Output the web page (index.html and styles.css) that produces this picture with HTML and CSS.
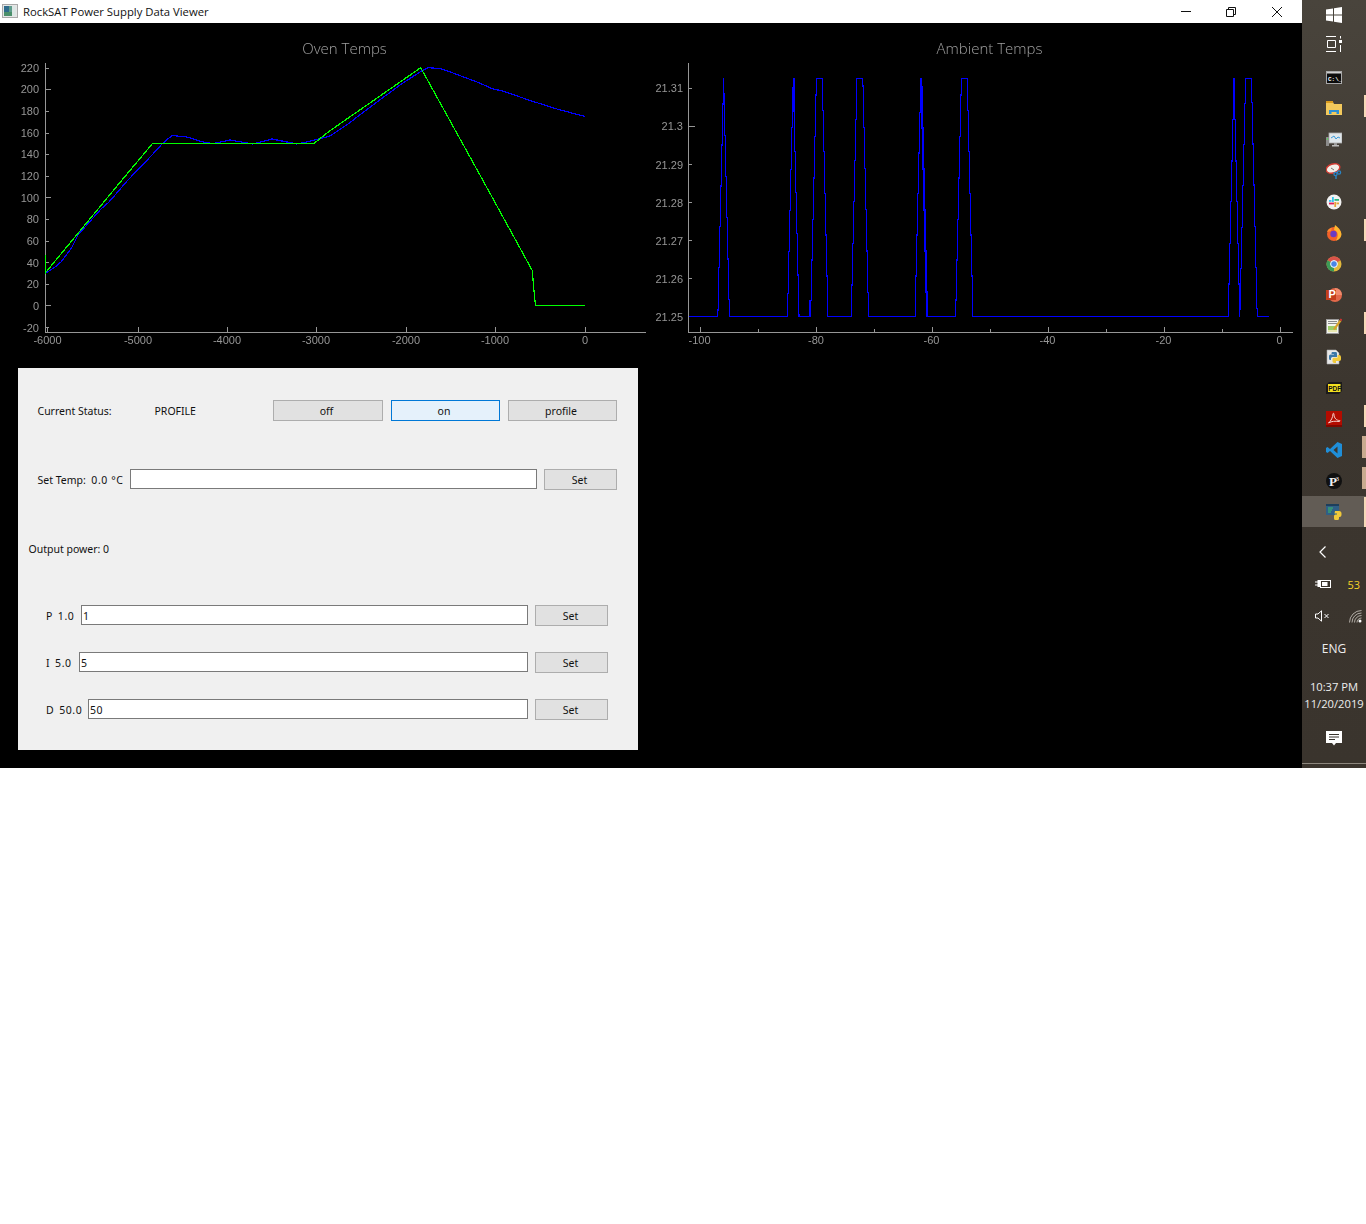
FILE: index.html
```html
<!DOCTYPE html>
<html>
<head>
    <title>RockSAT Power Supply Data Viewer</title>
    <link rel="stylesheet" href="styles.css">
</head>
<body>
<div class="screen">
    <div class="app">
        <div class="titlebar">
            <svg class="app-icon" width="16" height="16" viewBox="0 0 16 16">
                <rect x="0.5" y="0.5" width="15" height="13" fill="#e6e6e6" stroke="#a9a9a9"/>
                <rect x="2" y="2" width="5" height="10" fill="#2f6c8c"/>
                <rect x="7" y="2" width="3" height="10" fill="#5f9c8c"/>
                <rect x="10" y="2" width="4" height="10" fill="#dce6e4"/>
                <rect x="2" y="8" width="8" height="4" fill="#4a8f6a"/>
            </svg>
            <span class="app-title">RockSAT Power Supply Data Viewer</span>
            <div class="window-controls">
                <svg class="win-min" width="12" height="12" viewBox="0 0 12 12"><path d="M1 5.5H11" stroke="#111" fill="none"/></svg>
                <svg width="12" height="12" viewBox="0 0 12 12"><path d="M1.5 3.5H8.5V10.5H1.5ZM3.5 3.5V1.5H10.5V8.5H8.5" stroke="#111" fill="none"/></svg>
                <svg width="12" height="12" viewBox="0 0 12 12"><path d="M1 1L11 11M11 1L1 11" stroke="#111" fill="none"/></svg>
            </div>
        </div>

        <div class="plots">
            <!-- viewBox keeps the screen coordinates of the readings -->
            <svg class="plot" width="646" height="345" viewBox="0 23 646 345">
                <text class="plot-title" x="344.5" y="54">Oven Temps</text>
                <path class="axis" d="M45.5 63V332.5H646"/>
                <path class="axis" d="M45.5 68H49M45.5 89.5H51M45.5 111H49M45.5 133H49M45.5 154H49M45.5 176H49M45.5 197.5H51M45.5 219H49M45.5 241H49M45.5 262H49M45.5 284H49M45.5 305.5H51M45.5 327H49"/>
                <path class="axis" d="M47.5 332V327M138.5 332V327M227.5 332V327M316.5 332V327M406.5 332V327M495.5 332V327M585.5 332V327"/>
                <g class="tick-left">
                    <text x="39" y="72">220</text>
                    <text x="39" y="93">200</text>
                    <text x="39" y="115">180</text>
                    <text x="39" y="137">160</text>
                    <text x="39" y="158">140</text>
                    <text x="39" y="180">120</text>
                    <text x="39" y="202">100</text>
                    <text x="39" y="223">80</text>
                    <text x="39" y="245">60</text>
                    <text x="39" y="267">40</text>
                    <text x="39" y="288">20</text>
                    <text x="39" y="310">0</text>
                    <text x="39" y="332">-20</text>
                </g>
                <g class="tick-bottom">
                    <text x="47.5" y="344">-6000</text>
                    <text x="138" y="344">-5000</text>
                    <text x="227" y="344">-4000</text>
                    <text x="316" y="344">-3000</text>
                    <text x="406" y="344">-2000</text>
                    <text x="495" y="344">-1000</text>
                    <text x="585" y="344">0</text>
                </g>
                <polyline class="trace-blue" points="46,273 55,267 61,262 71.5,248 78,235 101,209 109,202 128,180 152,155 163,143 172,135.5 187,137 203,142 213,143.5 230,140 247,143 253,144 272,139 297,144 313,140.5 330,136 348,124 365,111 400,85 420,72 428,67.7 440,68.5 453,73 477,82 493,89 503,91 530,100.5 557,109 585,116.5"/>
                <polyline class="trace-green" points="45.5,255 45.5,272.7 122,180 152.7,143.3 314,143.3 330,130.7 420.7,67.7 482.7,180 532.4,270.7 533,280 535.4,305.3 585,305.3"/>
            </svg>

            <svg class="plot" width="656" height="345" viewBox="646 23 656 345">
                <text class="plot-title" x="989.5" y="54">Ambient Temps</text>
                <path class="axis" d="M688.5 63V332.5H1293"/>
                <path class="axis" d="M688.5 88H692M688.5 126H695M688.5 164H692M688.5 202H692M688.5 240H692M688.5 278H692M688.5 316H692"/>
                <path class="axis" d="M700.5 332V327M758.5 332V329M816.5 332V327M874.5 332V329M932.5 332V327M990.5 332V329M1048.5 332V327M1106.5 332V329M1164.5 332V327M1222.5 332V329M1280.5 332V327"/>
                <g class="tick-left">
                    <text x="683" y="92">21.31</text>
                    <text x="683" y="130">21.3</text>
                    <text x="683" y="169">21.29</text>
                    <text x="683" y="207">21.28</text>
                    <text x="683" y="245">21.27</text>
                    <text x="683" y="283">21.26</text>
                    <text x="683" y="321">21.25</text>
                </g>
                <g class="tick-bottom">
                    <text x="699.5" y="344">-100</text>
                    <text x="816" y="344">-80</text>
                    <text x="931.5" y="344">-60</text>
                    <text x="1047.5" y="344">-40</text>
                    <text x="1163.5" y="344">-20</text>
                    <text x="1279.5" y="344">0</text>
                </g>
                <polyline class="trace-blue" points="688.5,316.7 717.3,316.7 717.3,310 718.3,310 718.3,267.7 719.3,267.7 719.3,226.7 720.3,226.7 720.3,186 721.3,186 721.3,145 722.3,145 722.3,104 723.3,104 723.3,78.3 723.3,94 724.3,94 724.3,135.3 725.3,135.3 725.3,176.7 726.3,176.7 726.3,217.7 727.3,217.7 727.3,259 728.3,259 728.3,299.3 729.3,299.3 729.3,316.7
                    787.3,316.7 787.3,293.3 788.3,293.3 788.3,251.7 789.3,251.7 789.3,210.7 790.3,210.7 790.3,169.3 791.3,169.3 791.3,127.7 792.3,127.7 792.3,87.3 793.3,87.3 793.3,78.3 794,78.3 794,111.7 794.3,111.7 794.3,151.7 795.3,151.7 795.3,192.3 796.3,192.3 796.3,233.3 797.3,233.3 797.3,275 798.3,275 798.3,315 799,315 799,316.7
                    810,316.7 810,300.7 811.3,300.7 811.3,260 812.3,260 812.3,219.3 813.3,219.3 813.3,178 814.3,178 814.3,136.7 815.3,136.7 815.3,95 816.3,95 816.3,78.3 822.7,78.3 822.7,110.7 823.7,110.7 823.7,151.7 824.7,151.7 824.7,193.3 825.7,193.3 825.7,235 826.7,235 826.7,276 827.7,276 827.7,316.7
                    851.7,316.7 851.7,285 852.7,285 852.7,243.3 853.7,243.3 853.7,201.7 854.7,201.7 854.7,160.7 855.7,160.7 855.7,119.3 856.7,119.3 856.7,78.3 862.7,78.3 862.7,86 863.7,86 863.7,127.3 864.7,127.3 864.7,168.3 865.7,168.3 865.7,209.3 866.7,209.3 866.7,251 867.7,251 867.7,292.3 868.7,292.3 868.7,316.7
                    915.7,316.7 915.7,276 916.7,276 916.7,235 917.7,235 917.7,193.3 918.7,193.3 918.7,153 919.7,153 919.7,112.7 920.3,112.7 920.3,78.3 921,78.3 921,87 922,87 922,128 923,128 923,169 924,169 924,210 925,210 925,251 926,251 926,292 927,292 927,316.7
                    955.3,316.7 955.3,300 956.3,300 956.3,260 957.7,260 957.7,219.3 958.7,219.3 958.7,178 959.7,178 959.7,136.7 960.7,136.7 960.7,95 961.7,95 961.7,78.3 967.3,78.3 967.3,110.7 968.3,110.7 968.3,151.7 969.3,151.7 969.3,193.3 970.3,193.3 970.3,235 971.3,235 971.3,276 972.3,276 972.3,316.7
                    1228.3,316.7 1228.3,284 1229.3,284 1229.3,243.3 1230.3,243.3 1230.3,201.7 1231.3,201.7 1231.3,161 1232.3,161 1232.3,119.3 1233.3,119.3 1233.3,78.3 1234.7,78.3 1234.7,119.3 1235.3,119.3 1235.3,161 1236.3,161 1236.3,201.7 1237.3,201.7 1237.3,243.3 1238.3,243.3 1238.3,284 1239.3,284 1239.3,316.7
                    1239.3,309.3 1240.3,309.3 1240.3,268.3 1241.3,268.3 1241.3,227.3 1242.3,227.3 1242.3,185.7 1243.3,185.7 1243.3,144.3 1244.3,144.3 1244.3,103.3 1245.3,103.3 1245.3,78.3 1251.3,78.3 1251.3,102.7 1252.3,102.7 1252.3,144 1253.3,144 1253.3,185 1254.3,185 1254.3,226.7 1255.3,226.7 1255.3,267.7 1256.3,267.7 1256.3,308.7 1257.3,308.7 1257.3,316.7 1268.7,316.7"/>
            </svg>
        </div>

        <div class="panel">
            <div class="row status-row">
                <span class="status-label">Current Status:</span>
                <span class="status-value">PROFILE</span>
                <div class="mode-buttons">
                    <button class="btn btn-off">off</button>
                    <button class="btn btn-on">on</button>
                    <button class="btn btn-profile">profile</button>
                </div>
            </div>
            <div class="row temp-row">
                <span class="temp-label">Set Temp:&nbsp; <span class="num">0.0 °C</span></span>
                <input type="text" class="field">
                <button class="btn btn-set">Set</button>
            </div>
            <div class="power-row">Output power: 0</div>
            <div class="row pid-row pid-first">
                <span class="pid-p">P&nbsp; <span class="num">1.0</span></span>
                <input type="text" class="field" value="1">
                <button class="btn btn-set">Set</button>
            </div>
            <div class="row pid-row">
                <span class="pid-i">I&nbsp; <span class="num">5.0</span></span>
                <input type="text" class="field" value="5">
                <button class="btn btn-set">Set</button>
            </div>
            <div class="row pid-row">
                <span class="pid-d">D&nbsp; <span class="num">50.0</span></span>
                <input type="text" class="field" value="50">
                <button class="btn btn-set">Set</button>
            </div>
        </div>
    </div>

    <div class="taskbar">
        <div class="task task-start">
            <svg width="16" height="16" viewBox="0 0 16 16"><path d="M0 2.5L7 1.5V7.5H0ZM8 1.3L16 0V7.5H8ZM0 8.5H7V14.5L0 13.5ZM8 8.5H16V16L8 14.7Z" fill="#fff"/></svg>
        </div>
        <div class="task task-view">
            <svg width="16" height="16" viewBox="0 0 16 16"><path d="M0 .5H10M0 15.5H10M1.5 4.5H9.5V11.5H1.5Z" stroke="#fff" fill="none"/><rect x="13" y="4" width="3" height="3" fill="#fff"/><path d="M14.5 0V2.5M14.5 9V16" stroke="#fff" fill="none"/></svg>
        </div>
        <div class="task">
            <svg width="16" height="14" viewBox="0 0 16 14"><rect x=".5" y=".5" width="15" height="12" fill="#0c0c0c" stroke="#a8a8a8"/><rect x="1" y="1" width="14" height="1.5" fill="#cfcfcf"/><text class="cmd-text" x="2" y="10">C:\_</text></svg>
        </div>
        <div class="task running">
            <svg width="16" height="15" viewBox="0 0 16 15"><path d="M0 1H7L8 3H16V14H0Z" fill="#f3c95c"/><path d="M0 0H7V2H0Z" fill="#d99a1e"/><path d="M3 13V9H13V13H10.5V11H5.5V13Z" fill="#2b8fd6"/></svg>
        </div>
        <div class="task">
            <svg width="16" height="16" viewBox="0 0 16 16"><rect x="3" y="1" width="13" height="10" fill="#dfe6ea" stroke="#aaa" stroke-width=".8"/><path d="M5 6L8 4L10 7L12 5L14 6" stroke="#3a9ad9" fill="none"/><rect x="8" y="11" width="3" height="2" fill="#999"/><rect x="6" y="13" width="7" height="1.5" fill="#bbb"/><rect x="0" y="5" width="3" height="9" fill="#8c8c8c"/><rect x="1" y="6" width="1" height="2" fill="#5bd15b"/></svg>
        </div>
        <div class="task">
            <svg width="16" height="16" viewBox="0 0 16 16"><ellipse cx="7" cy="5.5" rx="7" ry="4.5" fill="#f4efe8" stroke="#d23c32" stroke-width="1.4" transform="rotate(-18 7 5.5)"/><path d="M5 5L8 7" stroke="#777"/><circle cx="9.5" cy="11" r="1.6" fill="none" stroke="#2a84c4" stroke-width="1.3"/><circle cx="13" cy="9.5" r="1.6" fill="none" stroke="#2a84c4" stroke-width="1.3"/><path d="M10 12.5V16" stroke="#2a84c4" stroke-width="1.4"/></svg>
        </div>
        <div class="task">
            <svg width="16" height="16" viewBox="0 0 16 16"><circle cx="8" cy="8" r="7.5" fill="#f2f2f2"/><rect x="6" y="3" width="1.8" height="5" fill="#36c5f0"/><rect x="8.5" y="5" width="4.5" height="1.8" fill="#2eb67d"/><rect x="8.3" y="8" width="1.8" height="5" fill="#e8a33b"/><rect x="3" y="8.6" width="5" height="1.8" fill="#e01e5a"/><rect x="3" y="6" width="2.5" height="1.8" fill="#36c5f0"/><rect x="10.5" y="8.5" width="2.5" height="1.8" fill="#e8a33b"/></svg>
        </div>
        <div class="task running">
            <svg width="16" height="16" viewBox="0 0 16 16"><circle cx="8" cy="9" r="7" fill="#f2612a"/><path d="M9 0C12 2 15 5 15.500 9C15.500 12 13 15 10 15.500C13 11 12 6 8 5Z" fill="#ffb52e"/><circle cx="7.500" cy="9" r="3.200" fill="#6a3bc4"/><path d="M1 7C2 4 4 3 6 3L5 6Z" fill="#ff8a2e"/></svg>
        </div>
        <div class="task">
            <svg width="16" height="16" viewBox="0 0 16 16"><circle cx="8" cy="8" r="7.5" fill="#e2b93b"/><path d="M8 8L1.5 4.2A7.5 7.5 0 0 1 14.5 4.2Z" fill="#d9534a"/><path d="M8 8L1.5 4.2A7.5 7.5 0 0 0 8 15.5Z" fill="#3d9b58"/><circle cx="8" cy="8" r="3.4" fill="#4a86e8" stroke="#fff"/></svg>
        </div>
        <div class="task">
            <svg width="16" height="16" viewBox="0 0 16 16"><circle cx="9" cy="8" r="7" fill="#e2694a"/><path d="M9 1A7 7 0 0 1 16 8H9Z" fill="#f08a6c"/><rect x="0" y="3" width="10" height="10" fill="#c43e1c"/><text class="ppt-text" x="2.5" y="11.3">P</text></svg>
        </div>
        <div class="task running">
            <svg width="16" height="16" viewBox="0 0 16 16"><rect x=".5" y="1.500" width="12" height="14" fill="#f4f4ee" stroke="#9a9a9a"/><path d="M2 3.500H11M2 5.500H11" stroke="#8a8a8a"/><rect x="2" y="8" width="9" height="6" fill="#9ccc6a"/><rect x="2" y="12" width="9" height="2" fill="#e8e8b0"/><path d="M7 11L13.500 2L15.500 3L9 12Z" fill="#d8a32a"/><path d="M13.500 2L14.500 .5L16 1.200V3Z" fill="#c33"/></svg>
        </div>
        <div class="task">
            <svg width="16" height="16" viewBox="0 0 16 16"><path d="M1 1H10L13 4V15H1Z" fill="#e8e8e8" stroke="#aaa" stroke-width=".6"/><path d="M6 3H10A1.5 1.5 0 0 1 11 4.5V8H6.5A1.5 1.5 0 0 0 5 9.5V11H4A1.5 1.5 0 0 1 3 9.5V7A1.5 1.5 0 0 1 4.5 5.5H8V5H5.5V4Z" fill="#3b78a8"/><path d="M11.5 6H13A2 2 0 0 1 15 8V10.500A2 2 0 0 1 13 12H10V14H8A2 2 0 0 1 6.500 12.500V10A1.500 1.500 0 0 1 8 8.800H11.500Z" fill="#f0c93a"/></svg>
        </div>
        <div class="task">
            <svg width="16" height="12" viewBox="0 0 16 12"><path d="M0 3L3 0H16V9L13 12H0Z" fill="#1a1a1a"/><rect x="2" y="2" width="12.500" height="8" fill="#f2e01f"/><text class="pdf-text" x="2.200" y="8.700">PDF</text></svg>
        </div>
        <div class="task running">
            <svg width="16" height="16" viewBox="0 0 16 16"><rect width="16" height="15" fill="#b30b00"/><rect y="14" width="16" height="2" fill="#7d0800"/><path d="M2.500 12C5 10 7 6 7 3C7 2 8 2 8 3.500C8 7 10.500 9.500 13.500 9.500C14.500 9.500 14 10.500 13 10.500C9 10 6 10 2.500 12Z" fill="none" stroke="#f6d4d0" stroke-width="1"/></svg>
        </div>
        <div class="task running running-wide">
            <svg width="16" height="16" viewBox="0 0 16 16"><path d="M11.500 0L16 2V14L11.500 16L4 9L1.500 11L0 10V6L1.500 5L4 7ZM11.500 4.500L7.500 8L11.500 11.500Z" fill="#1f8ed8"/></svg>
        </div>
        <div class="task running running-wide">
            <svg width="16" height="16" viewBox="0 0 16 16"><circle cx="8" cy="8" r="8" fill="#101010"/><text class="p3-text" x="3" y="12.500">P</text><text class="p3-sup" x="9.500" y="8">3</text></svg>
        </div>
        <div class="task task-active running">
            <svg width="16" height="16" viewBox="0 0 16 16"><rect x="0" y="0" width="13" height="11" fill="#2f5f86"/><rect x="0" y="0" width="13" height="2" fill="#1d3f5c"/><path d="M2 4H7M2 6H6M2 8H5" stroke="#3fbf6a"/><path d="M9 7H13A2.500 2.500 0 0 1 15.500 9.500V11A2 2 0 0 1 13.500 13H13V14.500A1.500 1.500 0 0 1 11 16H9.500A1.500 1.500 0 0 1 8 14.500V12A1.500 1.500 0 0 1 9.500 10.500H11V9.500H8.500Z" fill="#f0c93a"/></svg>
        </div>

        <div class="tray-chevron">
            <svg width="10" height="14" viewBox="0 0 10 14"><path d="M7.500 1.500L2 7L7.500 12.500" stroke="#fff" stroke-width="1.200" fill="none"/></svg>
        </div>
        <div class="tray-row">
            <svg width="16" height="10" viewBox="0 0 16 10"><path d="M0 3H3M0 6H3" stroke="#fff" fill="none"/><path d="M2.500 1H5V8H2.500Z" fill="#fff"/><rect x="5.500" y="1.500" width="10" height="7" fill="#38332c" stroke="#fff"/><rect x="7" y="3" width="5.500" height="4" fill="#fff"/></svg>
            <span class="battery-pct">53</span>
        </div>
        <div class="tray-row">
            <svg width="15" height="12" viewBox="0 0 15 12"><path d="M.5 4H3L6.500 .8V11.200L3 8H.5Z" stroke="#fff" fill="none"/><path d="M9.500 4L13.500 8M13.500 4L9.500 8" stroke="#fff" fill="none"/></svg>
            <svg class="wifi-icon" width="13" height="13" viewBox="0 0 13 13"><path d="M.5 12.500A12 12 0 0 1 12.500 .5M3 12.500A9.500 9.500 0 0 1 12.500 3M5.500 12.500A7 7 0 0 1 12.500 5.500M8 12.500A4.500 4.500 0 0 1 12.500 8" stroke="#cfcac4" fill="none" stroke-width=".8"/><circle cx="11" cy="11" r="1.500" fill="#fff"/></svg>
        </div>
        <div class="tray-lang">ENG</div>
        <div class="tray-clock">
            <span>10:37 PM</span>
            <span>11/20/2019</span>
        </div>
        <div class="tray-notify">
            <svg width="16" height="16" viewBox="0 0 16 16"><path d="M0 0H16V12H10L8 14.500L6 12H0Z" fill="#fff"/><path d="M3 3.500H13M3 6H13M3 8.500H9" stroke="#38332c"/></svg>
        </div>
        <div class="tray-line"></div>
    </div>
</div>
</body>
</html>
```

FILE: styles.css
```css
body {
    margin: 0;
    background-color: white;
    font-family: "Noto Sans", sans-serif;
}
.screen {
    display: flex;
    height: 768px;
}
.app {
    width: 1302px;
    background-color: black;
}

/* title bar */
.titlebar {
    display: flex;
    align-items: center;
    height: 23px;
    background-color: white;
    color: #111;
    font-family: "Open Sans", sans-serif;
    font-size: 11.3px;
}
.app-icon {
    margin-left: 2px;
    margin-right: 5px;
}
.window-controls {
    display: flex;
    gap: 34px;
    margin-left: auto;
    margin-right: 19px;
}
.win-min {
    margin-right: -1px;
}

/* plots */
.plots {
    display: flex;
    height: 345px;
}
.plot {
    display: block;
    will-change: transform;
}
.plot-title {
    fill: #a0a0a0;
    font-family: "Open Sans", sans-serif;
    font-size: 15px;
    font-weight: 300;
    text-anchor: middle;
}
.axis {
    fill: none;
    stroke: #969696;
    stroke-width: 1;
    shape-rendering: crispEdges;
}
.tick-left text, .tick-bottom text {
    fill: #969696;
    font-family: "Liberation Sans", sans-serif;
    font-size: 11px;
}
.tick-left text {
    text-anchor: end;
}
.tick-bottom text {
    text-anchor: middle;
}
.trace-blue, .trace-green {
    fill: none;
    stroke-width: 1.2;
    shape-rendering: crispEdges;
}
.trace-blue {
    stroke: #0000ff;
}
.trace-green {
    stroke: #00ff00;
}

/* control panel */
.panel {
    width: 620px;
    height: 382px;
    margin-left: 18px;
    padding-top: 32px;
    box-sizing: border-box;
    background-color: #f0f0f0;
    color: #111;
    font-size: 10.5px;
}
.row {
    display: flex;
    align-items: center;
    height: 21px;
}
.status-row {
    padding-left: 19.5px;
}
.status-label {
    width: 117px;
}
.status-value {
    width: 118px;
}
.mode-buttons {
    display: flex;
    gap: 8px;
}
.btn {
    height: 21px;
    padding: 0 2px 0 0;
    border: 1px solid #adadad;
    background-color: #e1e1e1;
    color: #111;
    font-family: "Noto Sans", sans-serif;
    font-size: 10.5px;
}
.btn-off {
    width: 110px;
}
.btn-on {
    width: 109px;
    border-color: #0078d7;
    background-color: #e5f1fb;
}
.btn-profile {
    width: 109px;
}
.btn-set {
    width: 73px;
    flex-shrink: 0;
}
.field {
    flex: 1;
    min-width: 0;
    height: 20px;
    padding: 1px 0 0 1px;
    box-sizing: border-box;
    border: 1px solid #7a7a7a;
    background-color: white;
    color: #111;
    font-family: "Noto Sans", sans-serif;
    font-size: 10.5px;
    letter-spacing: .4px;
    align-self: flex-start;
}
.num {
    letter-spacing: .6px;
}
.temp-row {
    width: 599px;
    margin-top: 48px;
    padding-left: 19.5px;
    box-sizing: border-box;
    gap: 7px;
}
.temp-label {
    width: 85.5px;
    white-space: nowrap;
}
.power-row {
    margin-top: 52px;
    margin-left: 10.5px;
    line-height: 14px;
}
.pid-row {
    width: 590px;
    margin-top: 26px;
    padding-left: 28px;
    box-sizing: border-box;
    gap: 7px;
}
.pid-first {
    margin-top: 49px;
}
.pid-p {
    width: 28px;
    white-space: nowrap;
}
.pid-i {
    width: 26px;
    white-space: nowrap;
}
.pid-d {
    width: 35px;
    white-space: nowrap;
}

/* taskbar */
.taskbar {
    width: 64px;
    background: linear-gradient(#49443c, #3c362f 50%, #3a342d);
}
.task {
    position: relative;
    display: flex;
    align-items: center;
    justify-content: center;
    height: 31px;
}
.task-start {
    height: 30px;
}
.task-view {
    height: 32px;
    padding-bottom: 4px;
    box-sizing: border-box;
}
.task-active {
    background-color: #625c55;
}
.running::after {
    content: "";
    position: absolute;
    top: 2px;
    bottom: 7px;
    right: 0;
    width: 2px;
    background-color: #f6d9b8;
}
.task-active::after {
    top: 1px;
    bottom: 0;
}
.running-wide::after {
    width: 4px;
    background-color: #c9ab90;
}
.cmd-text {
    fill: #fff;
    font-family: "Liberation Mono", monospace;
    font-size: 6px;
    font-weight: bold;
}
.ppt-text {
    fill: #fff;
    font-family: "Liberation Sans", sans-serif;
    font-size: 11px;
    font-weight: bold;
}
.pdf-text {
    fill: #111;
    font-family: "Liberation Sans", sans-serif;
    font-size: 6.5px;
    font-weight: bold;
}
.p3-text {
    fill: #f0f0f0;
    font-family: "Liberation Serif", serif;
    font-size: 13px;
    font-weight: bold;
}
.p3-sup {
    fill: #f0f0f0;
    font-family: "Liberation Serif", serif;
    font-size: 7px;
}
.tray-chevron {
    display: flex;
    align-items: center;
    height: 32px;
    margin-top: 9px;
    padding-left: 16px;
}
.tray-row {
    display: flex;
    align-items: center;
    justify-content: space-between;
    height: 32px;
    padding: 0 6px 0 13px;
}
.battery-pct {
    color: #f5d327;
    font-family: "Open Sans", sans-serif;
    font-size: 11px;
}
.wifi-icon {
    margin-right: -2px;
}
.tray-lang {
    height: 32px;
    padding-top: 1px;
    box-sizing: border-box;
    line-height: 32px;
    text-align: center;
    color: #eeeeee;
    font-family: "Open Sans", sans-serif;
    font-size: 12px;
}
.tray-clock {
    display: flex;
    flex-direction: column;
    align-items: center;
    height: 33px;
    margin-top: 14px;
    color: #eeeeee;
    font-family: "Open Sans", sans-serif;
    font-size: 11.2px;
    line-height: 17px;
}
.tray-notify {
    display: flex;
    align-items: center;
    justify-content: center;
    height: 32px;
    margin-top: 12px;
}
.tray-line {
    height: 1px;
    margin-top: 8px;
    background-color: #8d877e;
}
```
